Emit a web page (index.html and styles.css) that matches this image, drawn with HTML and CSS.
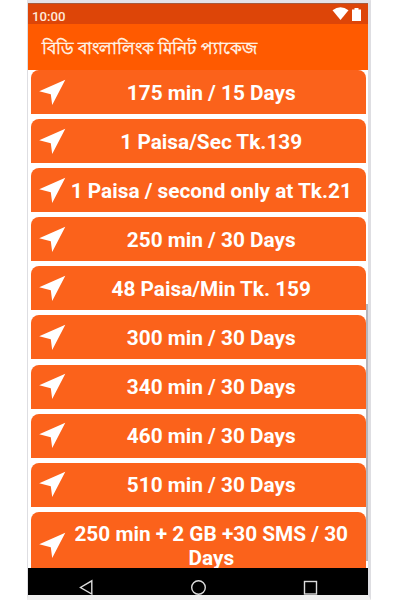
FILE: index.html
```
<!DOCTYPE html>
<html lang="bn">
<head>
<meta charset="utf-8">
<title>বিডি বাংলালিংক মিনিট প্যাকেজ</title>
<link rel="stylesheet" href="styles.css">
</head>
<body>
<svg class="defs" width="0" height="0"><symbol id="nav" viewBox="0 0 27 27"><path d="M26.300 .8 13.200 26 11.800 15.200 .2 12.300Z" fill="#fff"/></symbol></svg>
<div class="phone">
  <header class="status"><span>10:00</span>
    <svg width="30" height="15" viewBox="0 0 30 15"><path d="M.5 3.200Q8.500-2.500 16.500 3.200L8.500 13Z" fill="#fff"/><path d="M20 2.500h2.500V1h4v1.500H29V14h-9Z" fill="#fff"/></svg>
  </header>
  <h1 class="bar">বিডি বাংলালিংক মিনিট প্যাকেজ</h1>
  <main class="list">
    <div class="card"><svg class="icon"><use href="#nav"/></svg><p>175 min / 15 Days</p></div>
    <div class="card"><svg class="icon"><use href="#nav"/></svg><p>1 Paisa/Sec Tk.139</p></div>
    <div class="card"><svg class="icon"><use href="#nav"/></svg><p>1 Paisa / second only at Tk.21</p></div>
    <div class="card"><svg class="icon"><use href="#nav"/></svg><p>250 min / 30 Days</p></div>
    <div class="card"><svg class="icon"><use href="#nav"/></svg><p>48 Paisa/Min Tk. 159</p></div>
    <div class="card"><svg class="icon"><use href="#nav"/></svg><p>300 min / 30 Days</p></div>
    <div class="card"><svg class="icon"><use href="#nav"/></svg><p>340 min / 30 Days</p></div>
    <div class="card"><svg class="icon"><use href="#nav"/></svg><p>460 min / 30 Days</p></div>
    <div class="card"><svg class="icon"><use href="#nav"/></svg><p>510 min / 30 Days</p></div>
    <div class="card tall"><svg class="icon"><use href="#nav"/></svg><p>250 min + 2 GB +30 SMS / 30<br>Days</p></div>
    <div class="scrollbar"></div>
  </main>
  <footer class="keys">
    <svg width="340" height="27" viewBox="0 0 340 27" fill="none" stroke="#ddd" stroke-width="1.400"><path d="M63.800 12.800V26L52.500 19.500Z"/><circle cx="170.500" cy="19.500" r="6.800"/><rect x="276.500" y="13.500" width="12" height="12.500"/></svg>
  </footer>
</div>
</body>
</html>
```
FILE: styles.css
```
body {
  margin: 0;
  background: #fff;
  font-family: Roboto, "Noto Sans", sans-serif;
}
.defs { display: block; }
.phone {
  box-sizing: border-box;
  width: 344px;
  height: 600px;
  margin-left: 27px;
  border: solid #dedee2;
  border-width: 3px 3px 5px 1px;
  border-bottom-color: #f0f0f0;
  border-top-color: #e4e3e8;
  overflow: hidden;
}
.status {
  box-sizing: border-box;
  height: 21px;
  padding: 4px 6px 0 4px;
  border-top: 1px solid #a85b3d;
  display: flex;
  justify-content: space-between;
  background: #dd4508;
  color: #ffe9d8;
  font-size: 13.200px;
  font-weight: 500;
  line-height: 17px;
}
.status svg { margin-top: -1px; }
.bar {
  box-sizing: border-box;
  height: 46px;
  margin: 0;
  padding: 1px 0 0 14px;
  background: #ff5a00;
  color: #fff3e6;
  font-size: 16.900px;
  font-weight: 500;
  line-height: 46px;
  white-space: nowrap;
  -webkit-text-stroke: .5px #fff3e6;
}
.list {
  position: relative;
  box-sizing: border-box;
  height: 498px;
  padding: 0 2.500px 0 3px;
  overflow: hidden;
  display: flex;
  flex-direction: column;
  gap: 5.100px;
  background: #fff;
}
.card {
  box-sizing: border-box;
  flex: none;
  height: 44px;
  padding: 0 9px 0 8px;
  display: flex;
  align-items: center;
  border-radius: 8px 8px 0 0;
  background: #fb621b;
  color: #fff;
}
.icon {
  flex: none;
  width: 27px;
  height: 27px;
}
.card p {
  flex: 1;
  margin: 0;
  padding-top: 1px;
  text-align: center;
  font-size: 20.800px;
  font-weight: 700;
  line-height: 24px;
  white-space: nowrap;
}
.card.tall { height: 68px; }
.scrollbar {
  position: absolute;
  right: 0;
  top: 234px;
  width: 2px;
  height: 257px;
  background: #b7b5bb;
}
.keys {
  height: 27px;
  background: #000;
}
.keys svg { display: block; }
```
